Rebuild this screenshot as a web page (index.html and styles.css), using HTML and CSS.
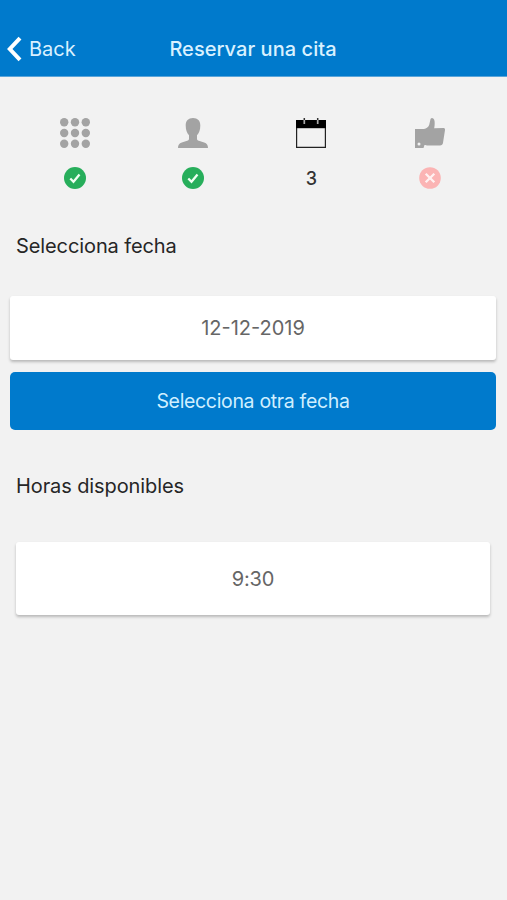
FILE: index.html
```html
<!DOCTYPE html>
<html lang="es">
<head>
<meta charset="utf-8">
<meta name="viewport" content="width=device-width, initial-scale=1">
<title>Reservar una cita</title>
<link rel="stylesheet" href="styles.css">
</head>
<body>
<header class="navbar">
  <a class="back"><svg class="chevron" width="15" height="26" viewBox="0 0 15 26"><path d="M13 2.200 2.800 13 13 23.800" fill="none" stroke="#fff" stroke-width="4"/></svg><span class="back-label">Back</span></a>
  <h1 class="title">Reservar una cita</h1>
</header>
<main>
  <section class="steps">
    <div class="step">
      <svg class="icon" viewBox="0 0 30 30" fill="#a3a3a3"><circle cx="4.200" cy="4.200" r="4.200"/><circle cx="15" cy="4.200" r="4.200"/><circle cx="25.800" cy="4.200" r="4.200"/><circle cx="4.200" cy="15" r="4.200"/><circle cx="15" cy="15" r="4.200"/><circle cx="25.800" cy="15" r="4.200"/><circle cx="4.200" cy="25.800" r="4.200"/><circle cx="15" cy="25.800" r="4.200"/><circle cx="25.800" cy="25.800" r="4.200"/></svg>
      <svg class="status" viewBox="0 0 22 22"><circle cx="11" cy="11" r="11" fill="#27ae5b"/><path d="m6.300 11.500 3.200 3.200 6-7.200" fill="none" stroke="#f0fff2" stroke-width="2.300"/></svg>
    </div>
    <div class="step">
      <svg class="icon" viewBox="0 0 30 30" fill="#a3a3a3"><path d="M15 0c4.700 0 7.300 2.800 7.300 7.500 0 4.500-1.300 7.800-3.300 9.800v3.500c0 1 .6 1.600 1.800 2l5.400 1.600c2.600.8 3.800 2.500 3.800 5.600H0c0-3.100 1.200-4.800 3.800-5.600l5.400-1.600c1.200-.4 1.800-1 1.800-2v-3.500c-2-2-3.300-5.300-3.300-9.800C7.700 2.800 10.300 0 15 0z"/></svg>
      <svg class="status" viewBox="0 0 22 22"><circle cx="11" cy="11" r="11" fill="#27ae5b"/><path d="m6.300 11.500 3.200 3.200 6-7.200" fill="none" stroke="#f0fff2" stroke-width="2.300"/></svg>
    </div>
    <div class="step">
      <svg class="icon" viewBox="0 0 30 30"><path d="M.6 2.500h28.800v26.900H.6z" fill="none" stroke="#222" stroke-width="1.200"/><path d="M0 2h30v8.200H0z" fill="#000"/><path d="M8.300 2v4M21.700 2v4" stroke="#aaa" stroke-width="1.700"/><path d="M8.300 0v2M21.700 0v2" stroke="#333" stroke-width="1.500"/></svg>
      <span class="current">3</span>
    </div>
    <div class="step">
      <svg class="icon" viewBox="0 0 30 30"><path d="M0 11h9c2.200-.2 4.800-2.200 5.300-4.500L15.300 2C15.500.7 16 0 17 0c2 0 2.700 2.300 2.700 5 0 2-.2 3.800-.5 5.300l9.300-.3c1.100 0 1.600.8 1.500 1.900l-2 12.900c-.3 1.800-1.300 2.700-3 2.700H13c-1.500 0-2.200-.5-3.500-.5L8.500 30H0z" fill="#a3a3a3"/><circle cx="4" cy="26" r="1.500" fill="#f2f2f2"/></svg>
      <svg class="status" viewBox="0 0 22 22"><circle cx="11" cy="11" r="10.800" fill="#fbb4b4"/><path d="m6.700 6.700 8.600 8.600m0-8.600-8.600 8.600" stroke="#fff1f1" stroke-width="2.300"/></svg>
    </div>
  </section>
  <h2 class="heading select">Selecciona fecha</h2>
  <div class="card date">12-12-2019</div>
  <button class="button" type="button">Selecciona otra fecha</button>
  <h2 class="heading hours">Horas disponibles</h2>
  <div class="card hour">9:30</div>
</main>
</body>
</html>
```
FILE: styles.css
```css
* { box-sizing: border-box; }
body {
  margin: 0;
  min-height: 900px;
  background: #f2f2f2;
  color: #262626;
  font-family: Inter, "Liberation Sans", sans-serif;
  font-size: 20px;
}
.navbar {
  display: grid;
  grid-template-columns: 1fr auto 1fr;
  align-items: center;
  height: 77px;
  padding: 22px 8px 0 7px;
  background: #007acc;
  border-bottom: 1px solid #5aa5da;
  color: #d9f1ff;
}
.back { display: flex; align-items: center; gap: 7px; }
.chevron { display: block; }
.title { margin: 0; font-size: 20px; font-weight: 500; letter-spacing: .05px; }
.steps {
  display: grid;
  grid-template-columns: repeat(4, 1fr);
  padding: 41px 18px 0 15.500px;
}
.step { display: flex; flex-direction: column; align-items: center; gap: 19px; }
.icon { width: 30px; height: 30px; }
.status { width: 22px; height: 22px; }
.current { font-size: 18px; font-weight: 500; line-height: 24px; color: #333; }
.heading {
  margin: 41px 16px 0;
  font-size: 20px;
  font-weight: 400;
  line-height: 28px;
  letter-spacing: -.1px;
}
.card {
  display: flex;
  align-items: center;
  justify-content: center;
  background: #fff;
  border-radius: 3px;
  box-shadow: 0 2px 3px rgba(0, 0, 0, .24);
  color: #666;
}
.date { height: 64px; margin: 36px 11px 0 10px; }
.button {
  display: block;
  width: calc(100% - 21px);
  height: 58px;
  margin: 12px 11px 0 10px;
  padding: 0;
  border: 0;
  border-radius: 5px;
  background: #007acc;
  color: #d0efff;
  font: inherit;
  font-size: 19.500px;
  letter-spacing: -.330px;
}
.hours { margin-top: 42px; }
.hour { height: 73px; margin: 42px 17px 0 16px; letter-spacing: -.200px; }
```
